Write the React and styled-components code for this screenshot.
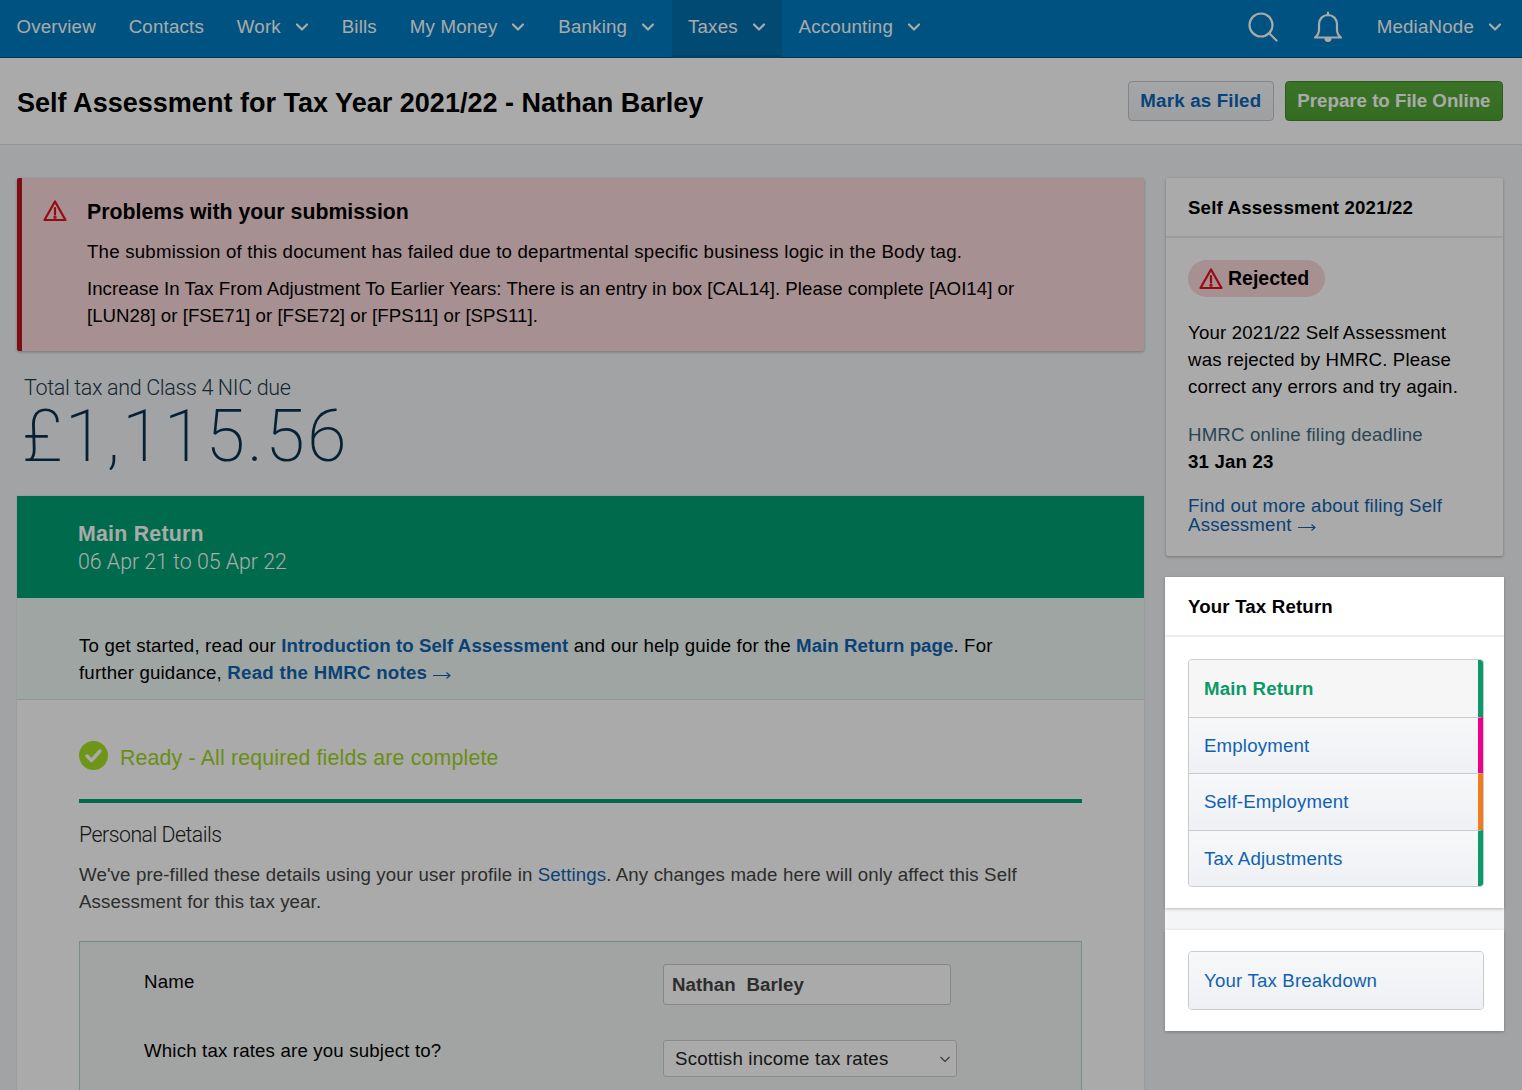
import React from "react";
import styled, { createGlobalStyle } from "styled-components";

const Global = createGlobalStyle`
  html, body { margin: 0; height: 1090px; overflow: hidden; }
  body { font-family: "Liberation Sans", Arial, sans-serif; color: #000; background: #f4f5f7; font-size: 18.67px; letter-spacing: .17px; }
  * { box-sizing: border-box; }
  a { text-decoration: none; color: #1063b0; }
`;

const Nav = styled.nav`
  height: 58px; background: #007bc2; border-bottom: 1px solid #0a4a80;
  display: flex; align-items: stretch; color: #fff; padding-right: 20px;
`;
const NavItem = styled.a`
  display: flex; align-items: center; gap: 14px; padding: 0 16.4px 4px; color: #fff; height: 58px;
  font-size: 18.7px; letter-spacing: .2px;
  background: ${p => (p.$active ? "#006fae" : "transparent")};
  box-shadow: ${p => (p.$active ? "inset 0 -3px 0 #00659f" : "none")};
`;
const NavRight = styled.div`
  margin-left: auto; display: flex; align-items: center; color: #fff; padding-bottom: 3px;
`;
const NavIcon = styled.span`
  display: flex; margin-right: ${p => p.$mr}px;
`;
const Account = styled.span`
  display: flex; align-items: center; gap: 14px; font-size: 18.7px; letter-spacing: .2px;
`;
const TitleBar = styled.header`
  height: 87px; background: #fff; border-bottom: 1px solid #dfe2e6;
  display: flex; align-items: center; justify-content: space-between; padding: 0 19px 0 17px;
`;
const Title = styled.h1`
  margin: 4px 0 0; font-size: 27px; font-weight: 700; line-height: 1.2; letter-spacing: .02px;
`;
const Actions = styled.div`display: flex; gap: 11px; margin-top: -1px;`;
const Button = styled.a`
  height: 40px; display: flex; align-items: center; padding: 0 11.5px; border-radius: 4px;
  font-size: 18.7px; font-weight: 700;
  letter-spacing: ${p => (p.$primary ? 0 : ".2px")};
  color: ${p => (p.$primary ? "#fff" : "#0a66b7")};
  background: ${p => (p.$primary ? "linear-gradient(#58ad3a,#4ea232)" : "linear-gradient(#f8f9fa,#eef0f3)")};
  border: 1px solid ${p => (p.$primary ? "#418a28" : "#c4c9cf")};
`;
const Grid = styled.div`
  display: grid; grid-template-columns: 1127px 337px; gap: 22px; padding: 33px 0 0 17px; align-items: start;
`;
const MainCol = styled.main`display: flex; flex-direction: column;`;
const Alert = styled.section`
  height: 173px; background: #fbd8da; border-left: 5px solid #bd1622; border-radius: 2px;
  box-shadow: 0 1px 3px rgba(0,0,0,.3); display: flex; padding: 19px 0 0 21px; gap: 20px;
`;
const AlertIcon = styled.span`display: block; margin-top: 2px; height: 24px;`;
const AlertBody = styled.div`flex: 1; max-width: 960px;`;
const AlertTitle = styled.h2`margin: 1px 0 12px; font-size: 21.3px; font-weight: 700; line-height: 28px; letter-spacing: 0;`;
const AlertText = styled.p`margin: 0 0 10px; font-size: 18.67px; line-height: 27px; letter-spacing: ${p => p.$ls}px;`;
const Total = styled.div`padding: 24px 0 0 7px; height: 145px;`;
const TotalLabel = styled.div`
  font-family: Roboto, sans-serif; font-weight: 300; font-size: 21.5px; line-height: 26px; color: #1e3a4c; letter-spacing: -.35px;
`;
const TotalValue = styled.div`
  font-family: Roboto, sans-serif; font-weight: 200; font-size: 72px; line-height: 71px; color: #083350; letter-spacing: 2.05px; margin-left: -2px;
`;
const Sheet = styled.section`background: #fff; height: 700px; box-shadow: 0 0 2px rgba(0,0,0,.12);`;
const SheetHead = styled.div`
  height: 102px; background: #009f73; color: #fff; padding: 25px 61px;
`;
const SheetName = styled.div`font-size: 21.3px; font-weight: 700; line-height: 27px; letter-spacing: .25px;`;
const SheetDates = styled.div`font-family: Roboto, sans-serif; font-weight: 300; font-size: 21.3px; line-height: 27px; letter-spacing: 0;`;
const Intro = styled.div`
  height: 102px; background: #eff8f5; border-bottom: 1px solid #d5e6df; padding: 34px 130px 0 62px;
  font-size: 18.67px; line-height: 27px;
  a { font-weight: 700; letter-spacing: .05px; }
  a:last-child { letter-spacing: .27px; }
`;
const Body = styled.div`padding: 0 62px;`;
const Ready = styled.div`
  display: flex; align-items: center; gap: 12px; padding-top: 18px;
  border-bottom: 4px solid #009f73; height: 103px;
  color: #9fd51f; font-size: 21.3px;
  svg { margin-top: -7px; }
`;
const SectionTitle = styled.h3`
  margin: 19px 0 0; font-family: Roboto, sans-serif; font-weight: 300; font-size: 21.3px; line-height: 26px; color: #222; letter-spacing: -.5px;
`;
const SectionText = styled.p`margin: 13px 0 0; font-size: 18.67px; line-height: 27px; color: #444; max-width: 960px; letter-spacing: .13px;`;
const FieldBox = styled.div`
  margin-top: 26px; border: 1px solid #a9d5c4; background: #f4f7f5; padding: 22px 64px; height: 300px;
`;
const FieldRow = styled.div`
  display: grid; grid-template-columns: 519px 1fr; margin-bottom: ${p => p.$mb}px; align-items: start;
  font-size: 18.67px;
`;
const FieldLabel = styled.label`line-height: ${p => p.$lh}px; display: block;`;
const TextInput = styled.input`
  width: 288px; height: 41px; border: 1px solid #c6c9cc; border-radius: 3px; background: #fff; padding: 0 8px;
  font: 700 18.67px "Liberation Sans", Arial, sans-serif; color: #444; letter-spacing: .1px;
`;
const SelectWrap = styled.div`position: relative; width: 294px;`;
const Select = styled.select`
  width: 100%; height: 37px; border: 1px solid #cdd0d3; border-radius: 3px; background: #fff; padding: 0 11px;
  font: 400 18.67px "Liberation Sans", Arial, sans-serif; color: #222; appearance: none; letter-spacing: .2px;
`;
const SelectCaret = styled.span`position: absolute; right: 5px; top: 12px; display: flex; pointer-events: none;`;
const Side = styled.aside`display: flex; flex-direction: column;`;
const Card = styled.section`
  background: #fff; border-radius: 2px; box-shadow: 0 1px 3px rgba(0,0,0,.3);
`;
const CardHead = styled.h3`
  margin: 0; height: 60px; display: flex; align-items: center; padding: 2px ${p => p.$inset}px 0;
  border-bottom: 2px solid #e6ecf1; font-size: 18.67px; font-weight: 700;
`;
const StatusBody = styled.div`padding: 22px 22px 22px;`;
const Pill = styled.span`
  display: inline-flex; align-items: center; gap: 5px; height: 37px; border-radius: 19px; background: #fbd8da;
  padding: 0 16px 0 11px; font-weight: 700; font-size: 19.5px; letter-spacing: 0;
`;
const StatusText = styled.p`margin: 22px 0 0; font-size: 18.67px; line-height: 27px;`;
const Muted = styled.div`margin-top: 21px; color: #3c6a80; font-size: 18.67px; line-height: 27px;`;
const Strong = styled.div`font-weight: 700; font-size: 18.67px; line-height: 27px;`;
const MoreLink = styled.a`display: block; margin-top: 21px; font-size: 18.67px; line-height: 19px; letter-spacing: .2px;`;
const Spot = styled.div`
  position: relative; z-index: 20; margin: 21px -1px 0;
  display: flex; flex-direction: column; gap: 22px; background: #f4f5f7;
`;
const SpotCard = styled(Card)`border-radius: 0; box-shadow: 0 1px 3px rgba(0,0,0,.25);`;
const ListPad = styled.div`padding: ${p => p.$top}px 20px 21px 23px;`;
const NavList = styled.div`
  border: 1px solid #c9cccf; border-radius: 4px; overflow: hidden; display: flex; flex-direction: column;
`;
const ListRow = styled.a`
  position: relative; display: flex; align-items: center; height: 56.5px; padding: 1px 15px 0;
  font-size: 18.67px; font-weight: ${p => (p.$current ? 700 : 400)};
  color: ${p => (p.$current ? "#0a9a68" : "#1063b0")};
  background: ${p => (p.$current ? "#f6f6f6" : "linear-gradient(#f7f8fa,#eef0f3)")};
  & + & { border-top: 1px solid #c9cccf; }
  border-right: 5px solid ${p => p.$stripe || "transparent"};
`;
const ArrowIcon = styled.svg`
  width: 18px; height: 10px; margin-left: 6px; vertical-align: -1px;
`;
const Overlay = styled.div`
  position: fixed; inset: 0; background: rgba(0,0,0,.333); z-index: 10;
`;

const Chevron = ({ size = 14 }) => (
  <svg width={size} height={size} viewBox="0 0 14 14" fill="none" stroke="currentColor" strokeWidth="2.2" strokeLinecap="round" strokeLinejoin="round">
    <path d="M2 4.5 7 9.5 12 4.5" />
  </svg>
);
const Arrow = () => (
  <ArrowIcon viewBox="0 0 18 10" fill="none" stroke="currentColor" strokeWidth="1.1">
    <path d="M0 5.500H17M13.500 2.500 17 5.500 13.500 8.500" />
  </ArrowIcon>
);
const Warn = ({ size = 24 }) => (
  <svg width={size} height={size} viewBox="0 0 24 24" fill="none" stroke="#e3101c" strokeWidth="2.200" strokeLinejoin="round" strokeLinecap="round">
    <path d="M12 2.500 1.500 21h21z" />
    <path d="M12 9v6.500" />
    <circle cx="12" cy="18.200" r=".6" fill="#e3101c" />
  </svg>
);

const items = [
  ["Overview"], ["Contacts"], ["Work", 1], ["Bills"], ["My Money", 1], ["Banking", 1], ["Taxes", 1, 1], ["Accounting", 1],
];

export default function App() {
  return (
    <>
      <Global />
      <Nav>
        {items.map(([t, c, a]) => (
          <NavItem key={t} $active={!!a}>
            {t}
            {c && <Chevron />}
          </NavItem>
        ))}
        <NavRight>
          <NavIcon $mr={35}>
            <svg width="30" height="30" viewBox="0 0 30 30" fill="none" stroke="currentColor" strokeWidth="2.200" strokeLinecap="round">
              <circle cx="13" cy="13" r="11.500" />
              <path d="M21.500 21.500 28.500 28.500" />
            </svg>
          </NavIcon>
          <NavIcon $mr={34}>
            <svg width="30" height="32" viewBox="0 0 30 32" fill="none" stroke="currentColor" strokeWidth="2.200" strokeLinejoin="round" strokeLinecap="round">
              <path d="M2 26.500c2.500-2 4-3.500 4-7.500v-6c0-5 4-9 9-9s9 4 9 9v6c0 4 1.500 5.500 4 7.500z" />
              <path d="M15 1.500v3" />
              <path d="M12.500 27c0 4 5 4 5 0" fill="currentColor" />
            </svg>
          </NavIcon>
          <Account>MediaNode <Chevron /></Account>
        </NavRight>
      </Nav>
      <TitleBar>
        <Title>Self Assessment for Tax Year 2021/22 - Nathan Barley</Title>
        <Actions>
          <Button>Mark as Filed</Button>
          <Button $primary>Prepare to File Online</Button>
        </Actions>
      </TitleBar>
      <Grid>
        <MainCol>
          <Alert>
            <AlertIcon><Warn /></AlertIcon>
            <AlertBody>
              <AlertTitle>Problems with your submission</AlertTitle>
              <AlertText $ls={0.21}>The submission of this document has failed due to departmental specific business logic in the Body tag.</AlertText>
              <AlertText $ls={0.03}>Increase In Tax From Adjustment To Earlier Years: There is an entry in box [CAL14]. Please complete [AOI14] or [LUN28] or [FSE71] or [FSE72] or [FPS11] or [SPS11].</AlertText>
            </AlertBody>
          </Alert>
          <Total>
            <TotalLabel>Total tax and Class 4 NIC due</TotalLabel>
            <TotalValue>£1,115.56</TotalValue>
          </Total>
          <Sheet>
            <SheetHead>
              <SheetName>Main Return</SheetName>
              <SheetDates>06 Apr 21 to 05 Apr 22</SheetDates>
            </SheetHead>
            <Intro>
              To get started, read our <a>Introduction to Self Assessment</a> and our help guide for the <a>Main Return page</a>. For further guidance, <a>Read the HMRC notes<Arrow /></a>
            </Intro>
            <Body>
              <Ready>
                <svg width="29" height="29" viewBox="0 0 29 29">
                  <circle cx="14.500" cy="14.500" r="14.500" fill="#a5e024" />
                  <path d="M8 15 12.500 19.500 21 10" fill="none" stroke="#fff" strokeWidth="3.400" strokeLinecap="round" strokeLinejoin="round" />
                </svg>
                Ready - All required fields are complete
              </Ready>
              <SectionTitle>Personal Details</SectionTitle>
              <SectionText>We've pre-filled these details using your user profile in <a>Settings</a>. Any changes made here will only affect this Self Assessment for this tax year.</SectionText>
              <FieldBox>
                <FieldRow $mb={35}>
                  <FieldLabel $lh={36}>Name</FieldLabel>
                  <TextInput readOnly value="Nathan  Barley" />
                </FieldRow>
                <FieldRow $mb={0}>
                  <FieldLabel $lh={22}>Which tax rates are you subject to?</FieldLabel>
                  <SelectWrap>
                    <Select defaultValue="s"><option value="s">Scottish income tax rates</option></Select>
                    <SelectCaret>
                      <svg width="14" height="14" viewBox="0 0 14 14" fill="none" stroke="#555" strokeWidth="1.200"><path d="M2.500 5 7 9.500 11.500 5" /></svg>
                    </SelectCaret>
                  </SelectWrap>
                </FieldRow>
              </FieldBox>
            </Body>
          </Sheet>
        </MainCol>
        <Side>
          <Card>
            <CardHead $inset={22}>Self Assessment 2021/22</CardHead>
            <StatusBody>
              <Pill><Warn size={24} />Rejected</Pill>
              <StatusText>Your 2021/22 Self Assessment was rejected by HMRC. Please correct any errors and try again.</StatusText>
              <Muted>HMRC online filing deadline</Muted>
              <Strong>31 Jan 23</Strong>
              <MoreLink>Find out more about filing Self Assessment<Arrow /></MoreLink>
            </StatusBody>
          </Card>
          <Spot>
            <SpotCard>
              <CardHead $inset={23}>Your Tax Return</CardHead>
              <ListPad $top={22}>
                <NavList>
                  <ListRow $current $stripe="#0a9a68">Main Return</ListRow>
                  <ListRow $stripe="#ec008c">Employment</ListRow>
                  <ListRow $stripe="#f07c1e">Self-Employment</ListRow>
                  <ListRow $stripe="#0a9a68">Tax Adjustments</ListRow>
                </NavList>
              </ListPad>
            </SpotCard>
            <SpotCard>
              <ListPad $top={21}>
                <NavList>
                  <ListRow>Your Tax Breakdown</ListRow>
                </NavList>
              </ListPad>
            </SpotCard>
          </Spot>
        </Side>
      </Grid>
      <Overlay />
    </>
  );
}
